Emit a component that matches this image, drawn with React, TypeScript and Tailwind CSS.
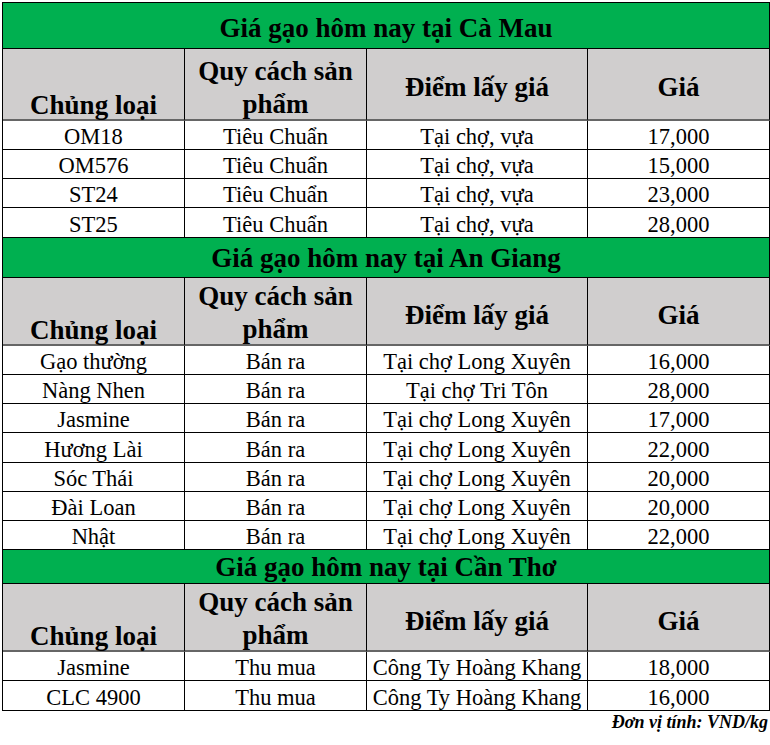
type Row = {
  name: string
  spec: string
  place: string
  price: string
  h: string
}

type Section = {
  title: string
  titleClass: string
  headClass: string
  centerPad: string
  rows: Row[]
}

const sections: Section[] = [
  {
    title: "Giá gạo hôm nay tại Cà Mau",
    titleClass: "h-[46px] pb-[5px]",
    headClass: "h-[72px]",
    centerPad: "pt-[6px]",
    rows: [
      { name: "OM18", spec: "Tiêu Chuẩn", place: "Tại chợ, vựa", price: "17,000", h: "h-[29px]" },
      { name: "OM576", spec: "Tiêu Chuẩn", place: "Tại chợ, vựa", price: "15,000", h: "h-[29px]" },
      { name: "ST24", spec: "Tiêu Chuẩn", place: "Tại chợ, vựa", price: "23,000", h: "h-[29px]" },
      { name: "ST25", spec: "Tiêu Chuẩn", place: "Tại chợ, vựa", price: "28,000", h: "h-[30px]" },
    ],
  },
  {
    title: "Giá gạo hôm nay tại An Giang",
    titleClass: "h-[40px] pb-[4px]",
    headClass: "h-[68px]",
    centerPad: "pt-[8px]",
    rows: [
      { name: "Gạo thường", spec: "Bán ra", place: "Tại chợ Long Xuyên", price: "16,000", h: "h-[29px]" },
      { name: "Nàng Nhen", spec: "Bán ra", place: "Tại chợ Tri Tôn", price: "28,000", h: "h-[29px]" },
      { name: "Jasmine", spec: "Bán ra", place: "Tại chợ Long Xuyên", price: "17,000", h: "h-[29px]" },
      { name: "Hương Lài", spec: "Bán ra", place: "Tại chợ Long Xuyên", price: "22,000", h: "h-[30px]" },
      { name: "Sóc Thái", spec: "Bán ra", place: "Tại chợ Long Xuyên", price: "20,000", h: "h-[29px]" },
      { name: "Đài Loan", spec: "Bán ra", place: "Tại chợ Long Xuyên", price: "20,000", h: "h-[29px]" },
      { name: "Nhật", spec: "Bán ra", place: "Tại chợ Long Xuyên", price: "22,000", h: "h-[29px]" },
    ],
  },
  {
    title: "Giá gạo hôm nay tại Cần Thơ",
    titleClass: "h-[34px] pb-[1px]",
    headClass: "h-[68px]",
    centerPad: "pt-[8px]",
    rows: [
      { name: "Jasmine", spec: "Thu mua", place: "Công Ty Hoàng Khang", price: "18,000", h: "h-[29px]" },
      { name: "CLC 4900", spec: "Thu mua", place: "Công Ty Hoàng Khang", price: "16,000", h: "h-[30px]" },
    ],
  },
]

const cols = "grid grid-cols-[182px_182px_221px_182px]"
const cell = "flex items-end justify-center text-center border-r border-b border-black"
const headCell =
  "flex justify-center text-center font-bold text-[27px] leading-[30px] bg-[#d0cece] border-r border-black border-b-2 border-b-[#666666]"

function PriceSection({ s }: { s: Section }) {
  return (
    <>
      <div
        className={`flex items-end justify-center border-r border-b border-black bg-[#00b050] font-bold text-[27px] leading-[30px] ${s.titleClass}`}
      >
        {s.title}
      </div>
      <div className={`${cols} ${s.headClass}`}>
        <div className={`${headCell} items-end`}>
          <div className="-mb-[1px]">Chủng loại</div>
        </div>
        <div className={`${headCell} items-end`}>
          <div className="leading-[33px] -mb-[2px]">Quy cách sản phẩm</div>
        </div>
        <div className={`${headCell} items-center ${s.centerPad}`}>Điểm lấy giá</div>
        <div className={`${headCell} items-center ${s.centerPad}`}>Giá</div>
      </div>
      {s.rows.map((r, i) => (
        <div key={i} className={`${cols} ${r.h} text-[22.5px] leading-[25px]`}>
          <div className={cell}>{r.name}</div>
          <div className={cell}>{r.spec}</div>
          <div className={cell}>{r.place}</div>
          <div className={cell}>{r.price}</div>
        </div>
      ))}
    </>
  )
}

export default function App() {
  return (
    <div
      className="min-h-[745px] w-[770px] bg-white pl-[2px] pt-[2px] text-black"
      style={{ fontFamily: '"Liberation Serif", "Times New Roman", serif' }}
    >
      <div className="w-[768px] border-l border-t border-black">
        {sections.map((s) => (
          <PriceSection key={s.title} s={s} />
        ))}
      </div>
      <div className="mt-[2px] w-[768px] pr-[2px] text-right text-[18px] font-bold italic leading-[18px]">
        Đơn vị tính: VND/kg
      </div>
    </div>
  )
}
